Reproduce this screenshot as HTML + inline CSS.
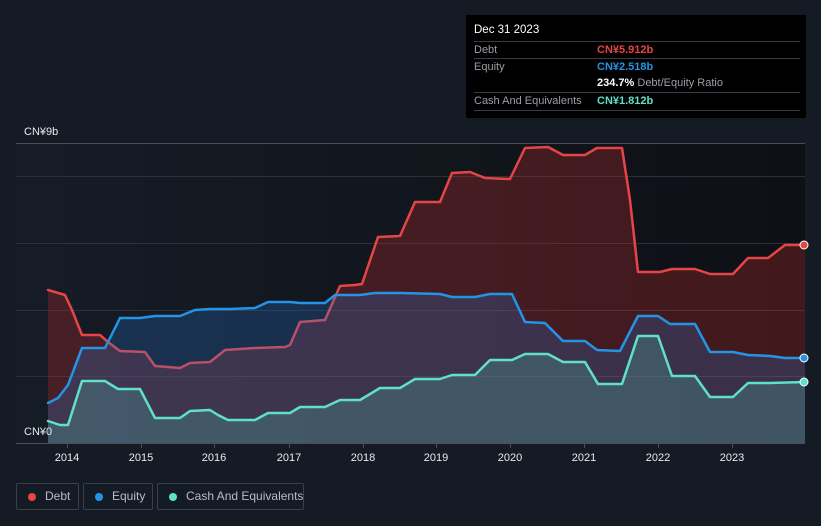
<!DOCTYPE html>
<html><head><meta charset="utf-8"><style>
html,body{margin:0;width:821px;height:526px;overflow:hidden}
body{background:#151b25;font-family:"Liberation Sans",sans-serif;position:relative}
.tt{position:absolute;left:466px;top:15px;width:340px;height:103px;background:#000;color:#fff;font-size:11px}
.tt .r{position:absolute;left:8px;width:326px;border-top:1px solid #3a3d44;height:17px;line-height:17px}
.tt .l{color:#9a9ea6;position:absolute;left:0}
.tt .v{position:absolute;left:123px}
.leg{position:absolute;top:483px;height:27px;border:1px solid #3a3f49;border-radius:2px;color:#b8bcc4;font-size:12px;line-height:25px;box-sizing:border-box;white-space:nowrap}
.leg i{position:absolute;top:9px;width:8px;height:8px;border-radius:50%}
</style></head><body>
<svg width="821" height="526" style="position:absolute;left:0;top:0">
<defs><linearGradient id="bg" x1="0" x2="1"><stop offset="0" stop-color="#161c26"/><stop offset="1" stop-color="#0d1015"/></linearGradient></defs>
<rect x="16" y="143" width="789" height="300" fill="url(#bg)"/>
<g stroke="#2c3038" stroke-width="1"><line x1="16" y1="176.5" x2="805" y2="176.5"/><line x1="16" y1="243.5" x2="805" y2="243.5"/><line x1="16" y1="310.5" x2="805" y2="310.5"/><line x1="16" y1="376.5" x2="805" y2="376.5"/></g>
<line x1="16" y1="143.5" x2="805" y2="143.5" stroke="#4a4e56"/>
<g stroke-linejoin="round" stroke-linecap="round">
<polygon fill="rgba(200,45,45,0.28)" points="48,290 65,295 72,310 82,335 100,335 108,342 120,351 145,352 155,366 180,368 190,363 210,362 225,350 240,349 255,348 285,347 290,345 300,322 325,320 340,286 355,285 362,284 378,237 400,236 415,202 440,202 452,173 470,172 485,178 510,179 525,148 548,147 563,155 585,155 597,148 622,148 630,200 638,272 660,272 672,269 695,269 710,274 733,274 748,258 768,258 785,245 805,245 805,443 48,443"/>
<polyline fill="none" stroke="#e64545" stroke-width="2.5" points="48,290 65,295 72,310 82,335 100,335 108,342 120,351 145,352 155,366 180,368 190,363 210,362 225,350 240,349 255,348 285,347 290,345 300,322 325,320 340,286 355,285 362,284 378,237 400,236 415,202 440,202 452,173 470,172 485,178 510,179 525,148 548,147 563,155 585,155 597,148 622,148 630,200 638,272 660,272 672,269 695,269 710,274 733,274 748,258 768,258 785,245 805,245"/>
<polygon fill="rgba(40,120,210,0.25)" points="48,403 58,398 68,385 82,348 105,348 120,318 140,318 155,316 180,316 195,310 210,309 230,309 255,308 268,302 290,302 300,303 325,303 335,295 360,295 375,293 400,293 440,294 452,297 475,297 490,294 512,294 525,322 545,323 563,341 585,341 597,350 620,351 638,316 658,316 670,324 695,324 710,352 733,352 748,355 770,356 785,358 805,358 805,443 48,443"/>
<polyline fill="none" stroke="#2394e6" stroke-width="2.5" points="48,403 58,398 68,385 82,348 105,348 120,318 140,318 155,316 180,316 195,310 210,309 230,309 255,308 268,302 290,302 300,303 325,303 335,295 360,295 375,293 400,293 440,294 452,297 475,297 490,294 512,294 525,322 545,323 563,341 585,341 597,350 620,351 638,316 658,316 670,324 695,324 710,352 733,352 748,355 770,356 785,358 805,358"/>
<polygon fill="rgba(80,180,170,0.28)" points="48,421 60,425 68,425 82,381 105,381 118,389 140,389 155,418 180,418 190,411 210,410 218,415 228,420 255,420 268,413 290,413 300,407 325,407 340,400 360,400 380,388 400,388 415,379 440,379 452,375 475,375 490,360 512,360 525,354 548,354 563,362 585,362 598,384 622,384 638,336 658,336 672,376 695,376 710,397 733,397 748,383 770,383 805,382 805,443 48,443"/>
<polyline fill="none" stroke="#5fe0c8" stroke-width="2.5" points="48,421 60,425 68,425 82,381 105,381 118,389 140,389 155,418 180,418 190,411 210,410 218,415 228,420 255,420 268,413 290,413 300,407 325,407 340,400 360,400 380,388 400,388 415,379 440,379 452,375 475,375 490,360 512,360 525,354 548,354 563,362 585,362 598,384 622,384 638,336 658,336 672,376 695,376 710,397 733,397 748,383 770,383 805,382"/>
</g>
<circle cx="804" cy="245" r="4" fill="#e64545" stroke="#fff" stroke-width="1"/>
<circle cx="804" cy="358" r="4" fill="#2394e6" stroke="#fff" stroke-width="1"/>
<circle cx="804" cy="382" r="4" fill="#5fe0c8" stroke="#fff" stroke-width="1"/>
<line x1="16" y1="443.5" x2="805" y2="443.5" stroke="#4a4e56"/>
<g stroke="#4a4e56"><line x1="67.5" y1="443" x2="67.5" y2="448"/><line x1="141.5" y1="443" x2="141.5" y2="448"/><line x1="214.5" y1="443" x2="214.5" y2="448"/><line x1="289.5" y1="443" x2="289.5" y2="448"/><line x1="363.5" y1="443" x2="363.5" y2="448"/><line x1="436.5" y1="443" x2="436.5" y2="448"/><line x1="510.5" y1="443" x2="510.5" y2="448"/><line x1="584.5" y1="443" x2="584.5" y2="448"/><line x1="658.5" y1="443" x2="658.5" y2="448"/><line x1="732.5" y1="443" x2="732.5" y2="448"/></g>
<g fill="#e8eaee" font-size="11" font-family="Liberation Sans, Noto Sans CJK SC, sans-serif" text-anchor="middle">
<text x="67" y="461">2014</text><text x="141" y="461">2015</text><text x="214" y="461">2016</text><text x="289" y="461">2017</text><text x="363" y="461">2018</text><text x="436" y="461">2019</text><text x="510" y="461">2020</text><text x="584" y="461">2021</text><text x="658" y="461">2022</text><text x="732" y="461">2023</text>
<text x="24" y="135" text-anchor="start">CN¥9b</text><text x="24" y="435" text-anchor="start">CN¥0</text>
</g>
</svg>
<div class="tt">
<div style="position:absolute;left:8px;top:9px;font-size:11.5px">Dec 31 2023</div>
<div class="r" style="top:26px"><span class="l">Debt</span><span class="v" style="color:#e64545;font-weight:bold">CN¥5.912b</span></div>
<div class="r" style="top:43px"><span class="l">Equity</span><span class="v" style="color:#2394e6;font-weight:bold">CN¥2.518b</span></div>
<div style="position:absolute;left:131px;top:60px;line-height:17px"><b>234.7%</b> <span style="color:#9a9ea6">Debt/Equity Ratio</span></div>
<div class="r" style="top:77px;border-bottom:1px solid #3a3d44"><span class="l">Cash And Equivalents</span><span class="v" style="color:#5fe0c8;font-weight:bold">CN¥1.812b</span></div>
</div>
<div class="leg" style="left:16px;width:63px"><i style="left:11px;background:#e64545"></i><span style="position:absolute;left:28px">Debt</span></div>
<div class="leg" style="left:83px;width:70px"><i style="left:11px;background:#2394e6"></i><span style="position:absolute;left:28px">Equity</span></div>
<div class="leg" style="left:157px;width:147px"><i style="left:11px;background:#5fe0c8"></i><span style="position:absolute;left:28px">Cash And Equivalents</span></div>
</body></html>
